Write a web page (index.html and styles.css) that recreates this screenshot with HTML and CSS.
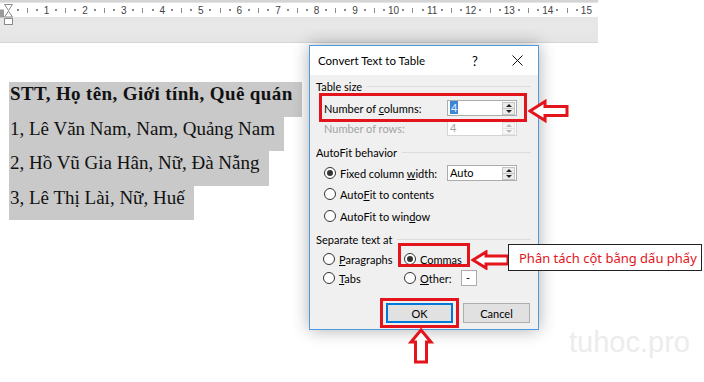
FILE: index.html
```html
<!DOCTYPE html>
<html lang="vi">
<head>
<meta charset="utf-8">
<title>Convert Text to Table</title>
<link rel="stylesheet" href="styles.css">
</head>
<body>
<div class="ruler">
  <div class="ruler-strip">
    <span class="r d"></span><span class="r t"></span><span class="r d"></span><span class="r n">1</span>
    <span class="r d"></span><span class="r t"></span><span class="r d"></span><span class="r n">2</span>
    <span class="r d"></span><span class="r t"></span><span class="r d"></span><span class="r n">3</span>
    <span class="r d"></span><span class="r t"></span><span class="r d"></span><span class="r n">4</span>
    <span class="r d"></span><span class="r t"></span><span class="r d"></span><span class="r n">5</span>
    <span class="r d"></span><span class="r t"></span><span class="r d"></span><span class="r n">6</span>
    <span class="r d"></span><span class="r t"></span><span class="r d"></span><span class="r n">7</span>
    <span class="r d"></span><span class="r t"></span><span class="r d"></span><span class="r n">8</span>
    <span class="r d"></span><span class="r t"></span><span class="r d"></span><span class="r n">9</span>
    <span class="r d"></span><span class="r t"></span><span class="r d"></span><span class="r n">10</span>
    <span class="r d"></span><span class="r t"></span><span class="r d"></span><span class="r n">11</span>
    <span class="r d"></span><span class="r t"></span><span class="r d"></span><span class="r n">12</span>
    <span class="r d"></span><span class="r t"></span><span class="r d"></span><span class="r n">13</span>
    <span class="r d"></span><span class="r t"></span><span class="r d"></span><span class="r n">14</span>
    <span class="r d"></span><span class="r t"></span><span class="r d"></span><span class="r n">15</span>
  </div>
  <svg class="indent" width="16" height="26" viewBox="0 0 16 26">
    <path d="M0 8.5 H4 V16.5 H0 Z" fill="#9a9a9a"/>
    <path d="M4.5 3.5 H12.5 L8.5 9.5 Z" fill="#fff" stroke="#8a8a8a"/>
    <path d="M8.5 10 L12.5 16 H4.5 Z" fill="#fff" stroke="#8a8a8a"/>
    <rect x="4.5" y="17.5" width="8" height="6" fill="#fff" stroke="#8a8a8a"/>
  </svg>
</div>

<div class="doc">
  <p class="sel bold">STT, Họ tên, Giới tính, Quê quán</p>
  <p class="sel">1, Lê Văn Nam, Nam, Quảng Nam</p>
  <p class="sel">2, Hồ Vũ Gia Hân, Nữ, Đà Nẵng</p>
  <p class="sel">3, Lê Thị Lài, Nữ, Huế</p>
</div>

<div class="dialog">
  <div class="titlebar">
    <span class="title">Convert Text to Table</span>
    <span class="help">?</span>
    <span class="close">
      <svg width="11" height="11" viewBox="0 0 11 11"><path d="M0.5 0.5 L10.5 10.5 M10.5 0.5 L0.5 10.5" stroke="#111" stroke-width="1"/></svg>
    </span>
  </div>
  <div class="body">
    <div class="glabel">Table size</div>
    <div class="row num first">
      <span class="lbl">Number of <u>c</u>olumns:</span>
      <span class="field"><span class="val"><span class="hl">4</span></span><span class="spin"><i class="up"></i><i class="dn"></i></span></span>
    </div>
    <div class="row num dis">
      <span class="lbl">Number of rows:</span>
      <span class="field"><span class="val">4</span><span class="spin"><i class="up"></i><i class="dn"></i></span></span>
    </div>

    <div class="glabel g2">AutoFit behavior</div>
    <div class="row radio r-fixed">
      <span class="rb on"></span><span class="rtext wfix">Fixed column <u>w</u>idth:</span>
      <span class="field"><span class="val">Auto</span><span class="spin"><i class="up"></i><i class="dn"></i></span></span>
    </div>
    <div class="row radio r-cont">
      <span class="rb"></span><span class="rtext">Auto<u>F</u>it to contents</span>
    </div>
    <div class="row radio r-win">
      <span class="rb"></span><span class="rtext">AutoFit to win<u>d</u>ow</span>
    </div>

    <div class="glabel g3">Separate text at</div>
    <div class="row sep r-par">
      <span class="opt"><span class="rb"></span><span class="rtext"><u>P</u>aragraphs</span></span>
      <span class="opt"><span class="rb on"></span><span class="rtext">Co<u>m</u>mas</span></span>
    </div>
    <div class="row sep r-tab">
      <span class="opt"><span class="rb"></span><span class="rtext"><u>T</u>abs</span></span>
      <span class="opt"><span class="rb"></span><span class="rtext olbl"><u>O</u>ther:</span><span class="other">-</span></span>
    </div>

    <div class="buttons">
      <span class="btn ok">OK</span>
      <span class="btn">Cancel</span>
    </div>
  </div>
</div>

<div class="redbox box-cols"></div>
<div class="redbox box-commas"></div>
<div class="redbox box-ok"></div>

<svg class="arrow arrow-cols" width="42" height="24" viewBox="0 0 42 24">
  <path d="M2 12 L17 2.5 V7.5 H39 V16.5 H17 V21.5 Z" fill="#fff" stroke="#e3141c" stroke-width="3" stroke-linejoin="miter"/>
</svg>
<svg class="arrow arrow-commas" width="40" height="20" viewBox="0 0 40 20">
  <path d="M2 10 L15 2 V6 H37 V14 H15 V18 Z" fill="#fff" stroke="#e3141c" stroke-width="3" stroke-linejoin="miter"/>
</svg>
<svg class="arrow arrow-ok" width="26" height="36" viewBox="0 0 26 36">
  <path d="M13 2 L23 14 H18.5 V34 H7.5 V14 H3 Z" fill="#fff" stroke="#e3141c" stroke-width="3" stroke-linejoin="miter"/>
</svg>

<div class="callout">Phân tách cột bằng dấu phẩy</div>

<div class="watermark">tuhoc.pro</div>
</body>
</html>
```

FILE: styles.css
```css
* { box-sizing: border-box; }

html, body {
  margin: 0;
  width: 704px;
  height: 382px;
  background: #fff;
  overflow: hidden;
}

body {
  position: relative;
  font-family: "Noto Sans", "DejaVu Sans", sans-serif;
}

/* ---------- ruler ---------- */
.ruler {
  position: relative;
  width: 598px;
  height: 43px;
  background: linear-gradient(#e3e3e3, #e8e8e8 60%, #e5e5e5);
  border-top: 2px solid #d4d4d4;
  border-bottom: 1px solid #d6d6d6;
  padding-top: 1px;
}

.ruler-strip {
  height: 14px;
  background: #fff;
  display: flex;
  align-items: center;
  padding-left: 12.8px;
}

.r {
  flex: none;
  width: 9.65px;
  height: 14px;
  display: flex;
  align-items: center;
  justify-content: center;
}

.d::before {
  content: "";
  width: 2px;
  height: 2px;
  background: #8a8a8a;
}

.t::before {
  content: "";
  width: 1px;
  height: 5px;
  background: #8a8a8a;
}

.n {
  font-family: "Liberation Sans", sans-serif;
  font-size: 10px;
  color: #444;
}

.indent {
  position: absolute;
  left: 0;
  top: -1px;
}

/* ---------- document ---------- */
.doc {
  padding: 39px 0 0 9px;
  font-family: "Liberation Serif", "Times New Roman", serif;
  font-size: 19px;
  color: #111;
}

.sel {
  margin: 0;
  width: fit-content;
  background: #c9c9c9;
  line-height: 24px;
  padding: 0 9px 10.5px 1px;
}

.bold {
  font-weight: bold;
  letter-spacing: 0.38px;
}

/* ---------- dialog ---------- */
.dialog {
  position: absolute;
  left: 309px;
  top: 45px;
  width: 230px;
  height: 285px;
  border: 1px solid #4d9ae0;
  background: #f0f0f0;
  box-shadow: 0 0 16px rgba(0, 0, 0, 0.32);
  display: flex;
  flex-direction: column;
  font-family: Lato, "Noto Sans", sans-serif;
  font-size: 11px;
  color: #000;
  white-space: nowrap;
}

.titlebar {
  height: 29px;
  background: #fff;
  display: flex;
  align-items: center;
  padding-left: 8px;
  flex: none;
}

.title { flex: 1; font-size: 11.5px; }

.help {
  width: 28px;
  margin-right: 7px;
  text-align: center;
  font-size: 13px;
}

.close {
  width: 42px;
  display: flex;
  justify-content: center;
  align-items: center;
}

.body {
  padding: 3px 7px 0 6px;
  flex: 1;
}

.glabel {
  height: 16px;
  display: flex;
  align-items: center;
  gap: 5px;
}

.glabel::after {
  content: "";
  flex: 1;
  height: 1px;
  background: #dcdcdc;
}

.g2 { margin-top: 8px; }
.g3 { margin-top: 7px; }

.row {
  height: 16px;
  display: flex;
  align-items: center;
  padding-left: 8px;
}

.num.first { margin-top: 6px; }
.num.dis { margin-top: 4px; color: #a3a3a3; }

.num .lbl { width: 123px; }

.field {
  width: 70px;
  height: 16px;
  background: #fff;
  border: 1px solid #acacac;
  display: flex;
  align-items: center;
  justify-content: space-between;
  padding: 0 1px;
}

.dis .field { border-color: #d5d5d5; }

.val { padding-left: 1px; line-height: 14px; }

.hl {
  background: #3a86d8;
  color: #e8f0ff;
  padding: 0 1px;
}

.spin {
  width: 13px;
  height: 13px;
  display: flex;
  flex-direction: column;
  border: 1px solid #c4c4c4;
  background: #ececec;
}

.dis .spin { border-color: #e2e2e2; background: #f6f6f6; }

.spin i {
  flex: 1;
  display: flex;
  align-items: center;
  justify-content: center;
}

.spin i + i { border-top: 1px solid #c4c4c4; }
.dis .spin i + i { border-top-color: #e2e2e2; }

.spin .up::before {
  content: "";
  border-left: 3px solid transparent;
  border-right: 3px solid transparent;
  border-bottom: 3px solid #222;
}

.spin .dn::before {
  content: "";
  border-left: 3px solid transparent;
  border-right: 3px solid transparent;
  border-top: 3px solid #222;
}

.dis .spin .up::before { border-bottom-color: #b8b8b8; }
.dis .spin .dn::before { border-top-color: #b8b8b8; }

/* radios */
.rb {
  flex: none;
  width: 12px;
  height: 12px;
  border: 1px solid #333;
  border-radius: 50%;
  background: #fff;
  display: flex;
  align-items: center;
  justify-content: center;
}

.rb.on::after {
  content: "";
  width: 6px;
  height: 6px;
  border-radius: 50%;
  background: #333;
}

.rtext { margin-left: 4px; }

.wfix { width: 107px; }

.r-fixed { margin-top: 5px; }
.r-cont { margin-top: 5px; }
.r-win { margin-top: 6px; }

.sep { padding-left: 7px; }
.r-par { margin-top: 4px; }
.r-tab { margin-top: 3px; }

.opt {
  display: flex;
  align-items: center;
}

.opt:first-child { width: 81px; }

.olbl { width: 41px; }

.other {
  width: 16px;
  height: 16px;
  background: #fff;
  border: 1px solid #acacac;
  padding-left: 4px;
  line-height: 13px;
}

.buttons {
  margin-top: 17px;
  display: flex;
  justify-content: flex-end;
  gap: 10px;
  padding-right: 1px;
}

.btn {
  width: 67px;
  height: 20px;
  border: 1px solid #adadad;
  background: #e1e1e1;
  display: flex;
  align-items: center;
  justify-content: center;
}

.btn.ok {
  border: 2px solid #0078d7;
}

/* ---------- annotations ---------- */
.redbox {
  position: absolute;
  border: 3px solid #e3141c;
}

.box-cols { left: 319px; top: 93px; width: 208px; height: 29px; }
.box-commas { left: 398px; top: 243px; width: 72px; height: 24px; }
.box-ok { left: 380px; top: 298px; width: 79px; height: 30px; }

.arrow { position: absolute; }
.arrow-cols { left: 528px; top: 99px; }
.arrow-commas { left: 471px; top: 250px; }
.arrow-ok { left: 408px; top: 328px; }

.callout {
  position: absolute;
  left: 508px;
  top: 244px;
  width: 194px;
  height: 27px;
  border: 1px solid #222;
  background: #fff;
  color: #e3141c;
  font-family: "Noto Sans", sans-serif;
  font-size: 13px;
  display: flex;
  align-items: center;
  padding-left: 10px;
}

.watermark {
  position: absolute;
  left: 569px;
  top: 326px;
  font-family: "Liberation Sans", Arial, sans-serif;
  font-size: 29px;
  color: #ececec;
}
```
